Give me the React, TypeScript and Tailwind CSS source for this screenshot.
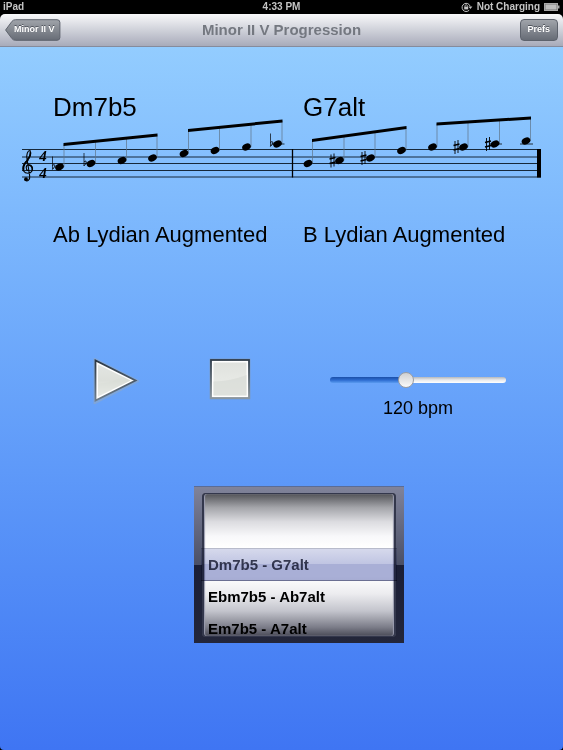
import { useState } from "react";

type Accidental = "flat" | "sharp";

interface Note {
  x: number;
  y: number;
  accidental?: Accidental;
  ledger?: boolean;
}

interface BeamGroup {
  start: number;
  end: number;
  notes: Note[];
}

const STAFF_LINES = [149.5, 157, 163.5, 170.5, 177];

const GROUPS: BeamGroup[] = [
  {
    start: 144.5,
    end: 135,
    notes: [
      { x: 59.5, y: 167, accidental: "flat" },
      { x: 91, y: 163.5, accidental: "flat" },
      { x: 122, y: 160.5 },
      { x: 152.5, y: 158 },
    ],
  },
  {
    start: 130.5,
    end: 121,
    notes: [
      { x: 184, y: 153.5 },
      { x: 215, y: 150.5 },
      { x: 246.5, y: 147 },
      { x: 277.5, y: 144, accidental: "flat", ledger: true },
    ],
  },
  {
    start: 140.5,
    end: 127.5,
    notes: [
      { x: 308, y: 163.5 },
      { x: 339.5, y: 160.5, accidental: "sharp" },
      { x: 370.5, y: 158, accidental: "sharp" },
      { x: 401.5, y: 150.5 },
    ],
  },
  {
    start: 124,
    end: 118,
    notes: [
      { x: 432.5, y: 147 },
      { x: 463.5, y: 147, accidental: "sharp" },
      { x: 495, y: 144, accidental: "sharp", ledger: true },
      { x: 526, y: 141, ledger: true },
    ],
  },
];

const PROGRESSIONS = ["Dm7b5 - G7alt", "Ebm7b5 - Ab7alt", "Em7b5 - A7alt"];

const MIN_BPM = 35;
const MAX_BPM = 235;

function StatusBar() {
  return (
    <div className="grid h-3.5 grid-cols-3 items-center bg-black px-[3px] text-[10px] font-bold leading-none text-[#c4c4c4]">
      <span>iPad</span>
      <span className="text-center">4:33 PM</span>
      <span className="flex items-center justify-end gap-1">
        <svg viewBox="0 0 12 10" className="h-2.5 w-3" aria-hidden="true">
          <path
            d="M8.2 8.2A4.1 4.1 0 1 1 9.1 4.2"
            fill="none"
            stroke="#c4c4c4"
            strokeWidth="1"
          />
          <path d="M7.4 4.4h4l-2 2.6z" fill="#c4c4c4" />
          <rect x="3.2" y="4.6" width="4" height="2.8" fill="#c4c4c4" />
          <path
            d="M4 4.8V3.9a1.2 1.2 0 0 1 2.4 0v.9"
            fill="none"
            stroke="#c4c4c4"
            strokeWidth=".8"
          />
        </svg>
        <span>Not Charging</span>
        <svg viewBox="0 0 16 8" className="h-2 w-4" aria-hidden="true">
          <rect x=".5" y=".5" width="13" height="7" fill="#777" stroke="#a8a8a8" />
          <rect x="1.5" y="1.5" width="11" height="5" fill="#bdbdbd" />
          <rect x="14" y="2.5" width="1.5" height="3" fill="#a8a8a8" />
        </svg>
      </span>
    </div>
  );
}

function NavBar() {
  return (
    <header className="bg-black">
      <StatusBar />
      <nav className="flex h-[33px] items-center justify-between rounded-t-[5px] border-b border-[#858b9c] bg-linear-to-b from-[#f8f9fa] to-[#a8abba] px-[5px]">
        <div className="flex flex-1">
          <button
            type="button"
            className="relative h-[22px] pr-1.5 pl-[9px] text-[9px] font-bold text-white"
          >
            <svg
              viewBox="0 0 56 22"
              preserveAspectRatio="none"
              className="absolute inset-0 h-full w-full"
              aria-hidden="true"
            >
              <defs>
                <linearGradient id="back" x1="0" y1="0" x2="0" y2="1">
                  <stop offset="0" stopColor="#a0a4aa" />
                  <stop offset="1" stopColor="#676c76" />
                </linearGradient>
              </defs>
              <path
                d="M.6 11 7 2.4Q8.4.7 10.5.7H52.5Q55.4.7 55.4 3.5V18.5Q55.4 21.3 52.5 21.3H10.5Q8.4 21.3 7 19.6Z"
                fill="url(#back)"
                stroke="#5d626c"
              />
            </svg>
            <span className="relative [text-shadow:0_-1px_0_#50545c]">Minor II V</span>
          </button>
        </div>
        <h1 className="text-[15px] font-bold text-[#747880]">
          Minor II V Progression
        </h1>
        <div className="flex flex-1 justify-end">
          <button
            type="button"
            className="h-[22px] rounded-[4px] border border-[#5d626c] bg-linear-to-b from-[#a0a4aa] to-[#676c76] px-[7px] text-[9px] font-bold text-white [text-shadow:0_-1px_0_#50545c]"
          >
            Prefs
          </button>
        </div>
      </nav>
    </header>
  );
}

function AccidentalMark({ kind, x, y }: { kind: Accidental; x: number; y: number }) {
  if (kind === "flat") {
    return (
      <g transform={`translate(${x} ${y})`} fill="none" stroke="#000">
        <path d="M0-10.5V2.5" strokeWidth=".7" />
        <path d="M0-1.5C2-3.5 4-1.5 0 2.3" strokeWidth="1" />
      </g>
    );
  }
  return (
    <g transform={`translate(${x} ${y})`} stroke="#000">
      <path d="M-1.5-6V7M1.5-7V6" strokeWidth=".9" />
      <path d="M-3-1.5L3-3M-3 3L3 1.5" strokeWidth="1.6" />
    </g>
  );
}

function Beam({ group }: { group: BeamGroup }) {
  const first = group.notes[0].x + 4.5;
  const last = group.notes[group.notes.length - 1].x + 4.5;
  const beamY = (x: number) =>
    group.start + ((x - first) / (last - first)) * (group.end - group.start);

  return (
    <g>
      {group.notes.map((note) => (
        <g key={note.x}>
          <path
            d={`M${note.x + 4.5} ${beamY(note.x + 4.5)}V${note.y}`}
            stroke="#5f7488"
            strokeWidth=".7"
          />
          {note.ledger && (
            <path
              d={`M${note.x - 6} 144H${note.x + 7}`}
              stroke="#22303d"
              strokeWidth="1"
            />
          )}
          <ellipse
            cx={note.x}
            cy={note.y}
            rx="4.5"
            ry="3.3"
            transform={`rotate(-25 ${note.x} ${note.y})`}
          />
          {note.accidental && (
            <AccidentalMark kind={note.accidental} x={note.x - 7} y={note.y} />
          )}
        </g>
      ))}
      <path
        d={`M${first - 0.5} ${group.start - 1.5}L${last + 0.5} ${group.end - 1.5}v3L${first - 0.5} ${group.start + 1.5}z`}
      />
    </g>
  );
}

function Score() {
  return (
    <svg
      viewBox="0 119 563 64"
      className="block w-full overflow-visible"
      role="img"
      aria-label="Two bars of eighth notes in four four"
    >
      {STAFF_LINES.map((y) => (
        <path key={y} d={`M22 ${y}H541`} stroke="#16283a" strokeWidth="1" />
      ))}
      <g fill="none" stroke="#000" strokeLinecap="round">
        <path
          d="M28 170.5C25.5 169.5 25.5 165 28.7 164.8C32.2 164.8 33.3 168.5 32 171C30.5 174 25.5 174 23.6 171C21.5 167 24.5 163 27.5 160C30.3 157 31.3 153.5 30 150.5C27.5 150.5 26.2 154.5 27 159L29.7 176C30.3 180.5 27 181.8 25.2 180"
          strokeWidth="1.1"
        />
        <path d="M23.5 169.5C22.8 166.5 25 163 27.8 160.2" strokeWidth="1.8" />
        <path d="M29 165.2C31 165.2 32.5 167.3 32.2 169.5" strokeWidth="1.5" />
        <path d="M27.5 159.5C29.5 157.5 30.5 155 30.4 152.5" strokeWidth="1.6" />
      </g>
      <circle cx="26" cy="179.2" r="1.9" />
      <g
        className="font-['Liberation_Serif',serif] text-[15px] font-bold italic"
        textAnchor="middle"
      >
        <text x="43" y="161">
          4
        </text>
        <text x="43" y="178">
          4
        </text>
      </g>
      {GROUPS.map((group) => (
        <Beam key={group.notes[0].x} group={group} />
      ))}
      <path d="M292.5 149V177.5" stroke="#000" strokeWidth="1.3" />
      <rect x="537" y="149" width="4" height="28.5" />
    </svg>
  );
}

function PlayIcon() {
  return (
    <svg viewBox="0 0 46 46" className="h-[46px] w-[46px]" aria-hidden="true">
      <defs>
        <linearGradient id="edge" x1="0" y1="0" x2="0" y2="1">
          <stop offset="0" stopColor="#2b3744" />
          <stop offset="1" stopColor="#6d7d8c" />
        </linearGradient>
        <linearGradient id="face" x1="0" y1="0" x2="0" y2="1">
          <stop offset="0" stopColor="#e2e5e2" />
          <stop offset=".5" stopColor="#dcdfda" />
          <stop offset="1" stopColor="#f1f2ef" />
        </linearGradient>
      </defs>
      <path d="M2 1.5V44.5L44 23z" fill="none" stroke="#8ea9c8" strokeOpacity=".6" strokeWidth="3" />
      <path d="M2.5 2.5V42.5L42.5 22.5z" fill="#fff" stroke="url(#edge)" strokeWidth="1.8" />
      <path d="M5 6.5V38.5L37.5 22.5z" fill="url(#face)" />
      <path d="M5 25.5Q17 25 30 19L37.5 22.5 5 38.5z" fill="#d8dbd5" opacity=".4" />
    </svg>
  );
}

function StopIcon() {
  return (
    <svg viewBox="0 0 42 42" className="h-[42px] w-[42px]" aria-hidden="true">
      <defs>
        <linearGradient id="stop-edge" x1="0" y1="0" x2="0" y2="1">
          <stop offset="0" stopColor="#303c49" />
          <stop offset="1" stopColor="#8b959c" />
        </linearGradient>
        <linearGradient id="stop-face" x1="0" y1="0" x2="0" y2="1">
          <stop offset="0" stopColor="#e0e2de" />
          <stop offset="1" stopColor="#eceeea" />
        </linearGradient>
      </defs>
      <rect x=".5" y=".5" width="41" height="41" rx="1" fill="#7f9bbb" fillOpacity=".7" />
      <rect x="2" y="2" width="38" height="38" fill="#fff" stroke="url(#stop-edge)" strokeWidth="1.8" />
      <rect x="4.5" y="4.5" width="33" height="33" fill="url(#stop-face)" />
      <path d="M4.5 23.5Q22 23 37.5 17V37.5H4.5z" fill="#d6d9d4" opacity=".6" />
    </svg>
  );
}

function TempoSlider() {
  const [bpm, setBpm] = useState(120);
  const filled = ((bpm - MIN_BPM) / (MAX_BPM - MIN_BPM)) * 100;

  return (
    <div className="flex flex-1 flex-col items-center pt-3.5">
      <div className="flex h-4 w-full items-center">
        <input
          id="tempo"
          type="range"
          min={MIN_BPM}
          max={MAX_BPM}
          value={bpm}
          onChange={(event) => setBpm(Number(event.target.value))}
          style={{ backgroundSize: `${filled}% 100%, 100% 100%` }}
          className="h-1.5 w-full appearance-none rounded-full bg-[linear-gradient(#1b4fa8,#2c6bd0_50%,#5a9bf0),linear-gradient(#b4b8be,#e9eaec_50%,#fff)] bg-no-repeat [&::-webkit-slider-thumb]:h-4 [&::-webkit-slider-thumb]:w-4 [&::-webkit-slider-thumb]:appearance-none [&::-webkit-slider-thumb]:rounded-full [&::-webkit-slider-thumb]:border [&::-webkit-slider-thumb]:border-[#9a9da3] [&::-webkit-slider-thumb]:bg-linear-to-b [&::-webkit-slider-thumb]:from-[#cfd0d2] [&::-webkit-slider-thumb]:to-[#fafafa]"
        />
      </div>
      <label htmlFor="tempo" className="mt-2 text-lg leading-6">
        {bpm} bpm
      </label>
    </div>
  );
}

function ProgressionPicker() {
  return (
    <div className="w-[210px] border-t border-[#5b6c95] bg-[linear-gradient(#80839a,#4a4f66_50%,#1a1e36_50%,#23263a)] px-2 py-1.5">
      <div className="relative h-36">
        <div
          role="listbox"
          aria-label="Progression"
          className="h-full overflow-hidden rounded-[4px] bg-[linear-gradient(#4c4d52,#a3a4a9_10%,#dcdce0_20%,#f8f8fa_30%,#fff_38%,#fff_58%,#ececef_70%,#c3c4cc_82%,#7d7e8a_93%,#454653)] pt-14"
        >
          {PROGRESSIONS.map((name, index) => (
            <button
              key={name}
              type="button"
              role="option"
              aria-selected={index === 0}
              className="block h-8 w-full px-1.5 text-left text-[15px] font-bold aria-selected:text-[#45485a]"
            >
              {name}
            </button>
          ))}
        </div>
        <div className="pointer-events-none absolute inset-0 rounded-[4px] border-x-2 border-y border-[#33374c] shadow-[inset_1px_0_1px_#9a9caf,inset_-1px_0_1px_#9a9caf]" />
        <div className="pointer-events-none absolute inset-x-[-1px] top-[55px] h-[33px] border-y border-t-[#b8bbcb] border-b-[#6d7194] bg-[linear-gradient(#d6d9ec,#bfc4e2_50%,#a9afd6_50%,#a9afd6)] mix-blend-multiply" />
      </div>
    </div>
  );
}

export default function App() {
  return (
    <div className="bg-black">
      <div className="flex min-h-screen flex-col rounded-b-[4px] bg-linear-to-b from-[#99d2ff] to-[#3f75f3] font-['Liberation_Sans',Arial,sans-serif] text-black">
        <NavBar />
        <main className="flex-1 pt-12">
          <div className="grid grid-cols-2 pr-2.5 pl-[53px] text-[26px] leading-6">
            <h2>Dm7b5</h2>
            <h2>G7alt</h2>
          </div>
          <Score />
          <div className="mt-[38px] grid grid-cols-2 pr-2.5 pl-[53px] text-[22px] leading-7">
            <p>Ab Lydian Augmented</p>
            <p>B Lydian Augmented</p>
          </div>

          <div className="mt-[109px] flex items-start pr-[57px] pl-[93px]">
            <button type="button" aria-label="Play">
              <PlayIcon />
            </button>
            <button type="button" aria-label="Stop" className="mr-[79px] ml-[70px]">
              <StopIcon />
            </button>
            <TempoSlider />
          </div>

          <div className="mt-[66px] flex justify-center pl-[35px]">
            <ProgressionPicker />
          </div>
        </main>
      </div>
    </div>
  );
}
